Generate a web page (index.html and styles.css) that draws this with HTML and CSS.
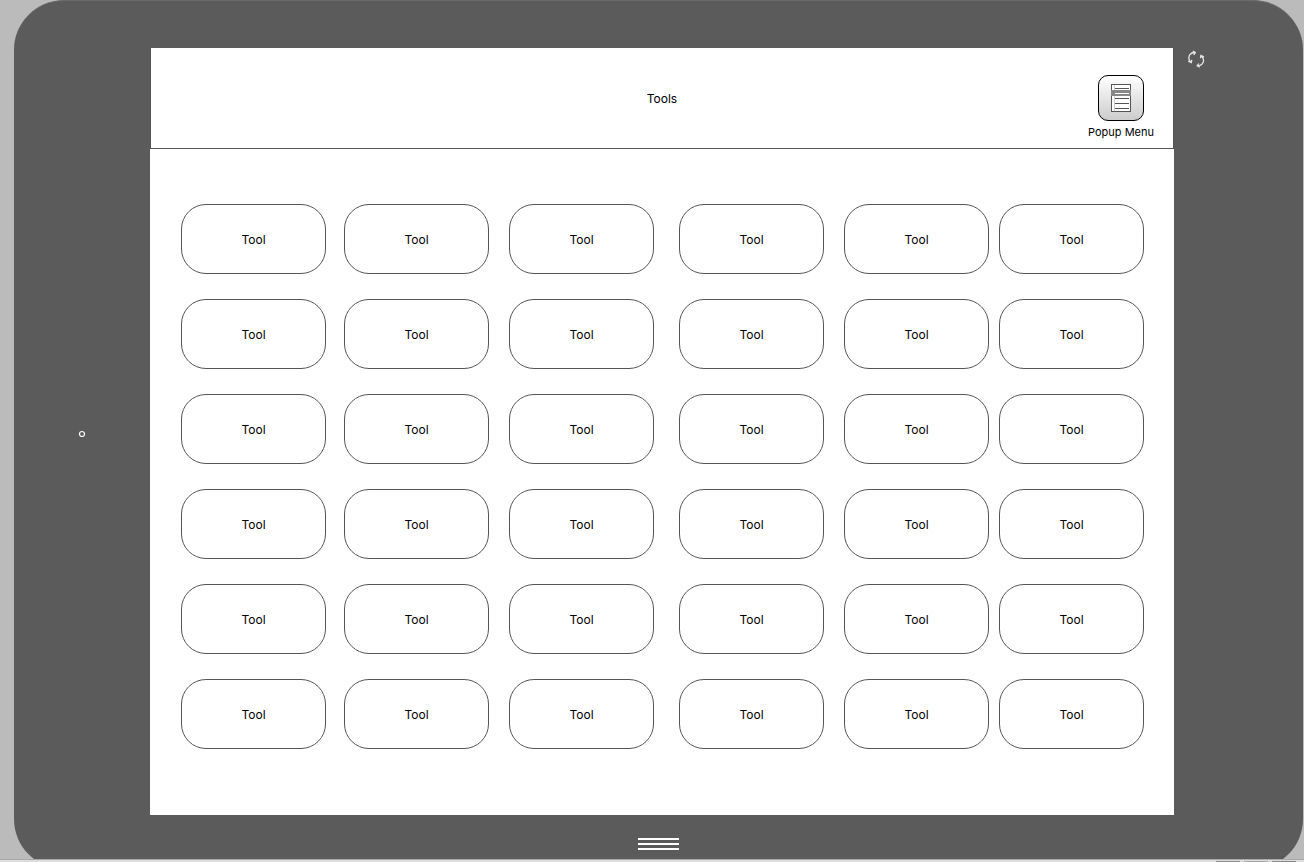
FILE: index.html
```html
<!DOCTYPE html>
<html lang="en">
<head>
<meta charset="utf-8">
<title>Tools</title>
<link rel="stylesheet" href="styles.css">
</head>
<body>
<div class="canvas">
  <div class="device">
    <div class="side side-left">
      <svg class="camera" width="8" height="8" viewBox="0 0 8 8" aria-hidden="true"><circle cx="4" cy="4" r="2.5" fill="none" stroke="#fff" stroke-width="1.2"/></svg>
    </div>
    <main class="screen">
      <header class="header">
        <h1 class="title">Tools</h1>
        <button class="menu" type="button">
          <span class="menu-icon">
            <svg width="20" height="28" viewBox="0 0 20 28" aria-hidden="true">
              <rect x="0.5" y="0.5" width="19" height="27" fill="#fff" stroke="#555"/>
              <path d="M3.5 1v26" stroke="#ccc"/>
              <path d="M4 4.5h14M4 14.5h14M4 19.5h14M4 24.5h14" stroke="#555"/>
              <rect x="0" y="6" width="20" height="6" fill="#888"/>
              <path d="M4 9.500h14" stroke="#fff"/>
            </svg>
          </span>
          <span>Popup Menu</span>
        </button>
      </header>
      <div class="tools">
        <button class="tool" type="button">Tool</button>
        <button class="tool" type="button">Tool</button>
        <button class="tool" type="button">Tool</button>
        <button class="tool" type="button">Tool</button>
        <button class="tool" type="button">Tool</button>
        <button class="tool" type="button">Tool</button>
        <button class="tool" type="button">Tool</button>
        <button class="tool" type="button">Tool</button>
        <button class="tool" type="button">Tool</button>
        <button class="tool" type="button">Tool</button>
        <button class="tool" type="button">Tool</button>
        <button class="tool" type="button">Tool</button>
        <button class="tool" type="button">Tool</button>
        <button class="tool" type="button">Tool</button>
        <button class="tool" type="button">Tool</button>
        <button class="tool" type="button">Tool</button>
        <button class="tool" type="button">Tool</button>
        <button class="tool" type="button">Tool</button>
        <button class="tool" type="button">Tool</button>
        <button class="tool" type="button">Tool</button>
        <button class="tool" type="button">Tool</button>
        <button class="tool" type="button">Tool</button>
        <button class="tool" type="button">Tool</button>
        <button class="tool" type="button">Tool</button>
        <button class="tool" type="button">Tool</button>
        <button class="tool" type="button">Tool</button>
        <button class="tool" type="button">Tool</button>
        <button class="tool" type="button">Tool</button>
        <button class="tool" type="button">Tool</button>
        <button class="tool" type="button">Tool</button>
        <button class="tool" type="button">Tool</button>
        <button class="tool" type="button">Tool</button>
        <button class="tool" type="button">Tool</button>
        <button class="tool" type="button">Tool</button>
        <button class="tool" type="button">Tool</button>
        <button class="tool" type="button">Tool</button>
      </div>
    </main>
    <div class="side side-right">
      <button class="rotate" type="button" aria-label="Rotate">
        <svg width="18" height="18" viewBox="0 0 18 18" fill="none" stroke="#e4e4e4" stroke-width="1.3" aria-hidden="true">
          <path d="M8 2.500C2.500 2.500 0 7.500 3.500 12M5.800 1.200L8.300 2.500L6.800 4.800M1.200 11.200L4.300 12.500L4.800 9.800"/>
          <path d="M10.500 15.800C16 15.800 18.500 10.500 14.500 6M12.700 17.200L10.200 15.800L11.700 13.500M17 6.800L13.900 5.500L13.500 8.200"/>
        </svg>
      </button>
    </div>
    <button class="home" type="button" aria-label="Home">
      <svg width="41" height="12" viewBox="0 0 41 12" aria-hidden="true"><path d="M0 1h41M0 6h41M0 11h41" stroke="#fff" stroke-width="2"/></svg>
    </button>
  </div>
</div>
<footer class="statusbar"><span class="mark"></span><span class="mark mark-light"></span><span class="mark"></span></footer>
</body>
</html>
```

FILE: styles.css
```css
* {
  box-sizing: border-box;
}

body {
  margin: 0;
  height: 100vh;
  display: flex;
  flex-direction: column;
  overflow: hidden;
  background: #bbb;
  color: #000;
  font: 12px/16px Inter, "Liberation Sans", sans-serif;
}

button {
  margin: 0;
  padding: 0;
  border: 0;
  background: none;
  color: inherit;
  font: inherit;
}

svg {
  display: block;
}

.canvas {
  flex: 1;
  min-height: 0;
  padding: 0 1px 0 14px;
  overflow: hidden;
  background: #bbb;
}

.device {
  height: calc(100% + 10px);
  display: grid;
  grid-template-columns: 136px 1fr 129px;
  grid-template-rows: 1fr 54px;
  padding-top: 47px;
  border-top: 1px solid #6b6b6b;
  border-radius: 50px;
  background: #5b5b5b;
}

.side-left {
  display: flex;
  align-items: center;
  justify-content: center;
  padding-top: 5px;
}

.side-right {
  padding: 2px 0 0 13px;
}

.screen {
  background: #fff;
}

.header {
  display: grid;
  grid-template-columns: 1fr auto 1fr;
  align-items: center;
  height: 101px;
  padding: 0 19px;
  border: 1px solid #555;
  border-top: 0;
}

.title {
  grid-column: 2;
  margin: 0;
  padding-top: 2px;
  font-size: 12px;
  font-weight: 400;
}

.menu {
  justify-self: end;
  display: flex;
  flex-direction: column;
  align-items: center;
  gap: 3px;
  padding-top: 18px;
  font-size: 11px;
}

.menu-icon {
  display: grid;
  place-items: center;
  width: 46px;
  height: 46px;
  border: 1px solid #000;
  border-radius: 10px;
  background: linear-gradient(#fff, #ccc);
}

.tools {
  display: grid;
  grid-template-columns: 163fr 165fr 170fr 165fr 155fr 145fr;
  row-gap: 25px;
  padding: 55px 30px 0 31px;
}

.tool {
  width: 145px;
  height: 70px;
  padding-top: 2px;
  border: 1px solid #555;
  border-radius: 25px;
  background: #fff;
}

.home {
  grid-column: 1 / -1;
  place-self: start center;
  padding: 23px 0;
}

.statusbar {
  display: flex;
  justify-content: flex-end;
  align-items: flex-end;
  gap: 4px;
  height: 3px;
  padding-right: 8px;
  border-top: 1px solid #aaa;
  background: #ddd;
}

.mark {
  width: 24px;
  height: 1px;
  background: #888;
}

.mark-light {
  background: #aaa;
}
```
